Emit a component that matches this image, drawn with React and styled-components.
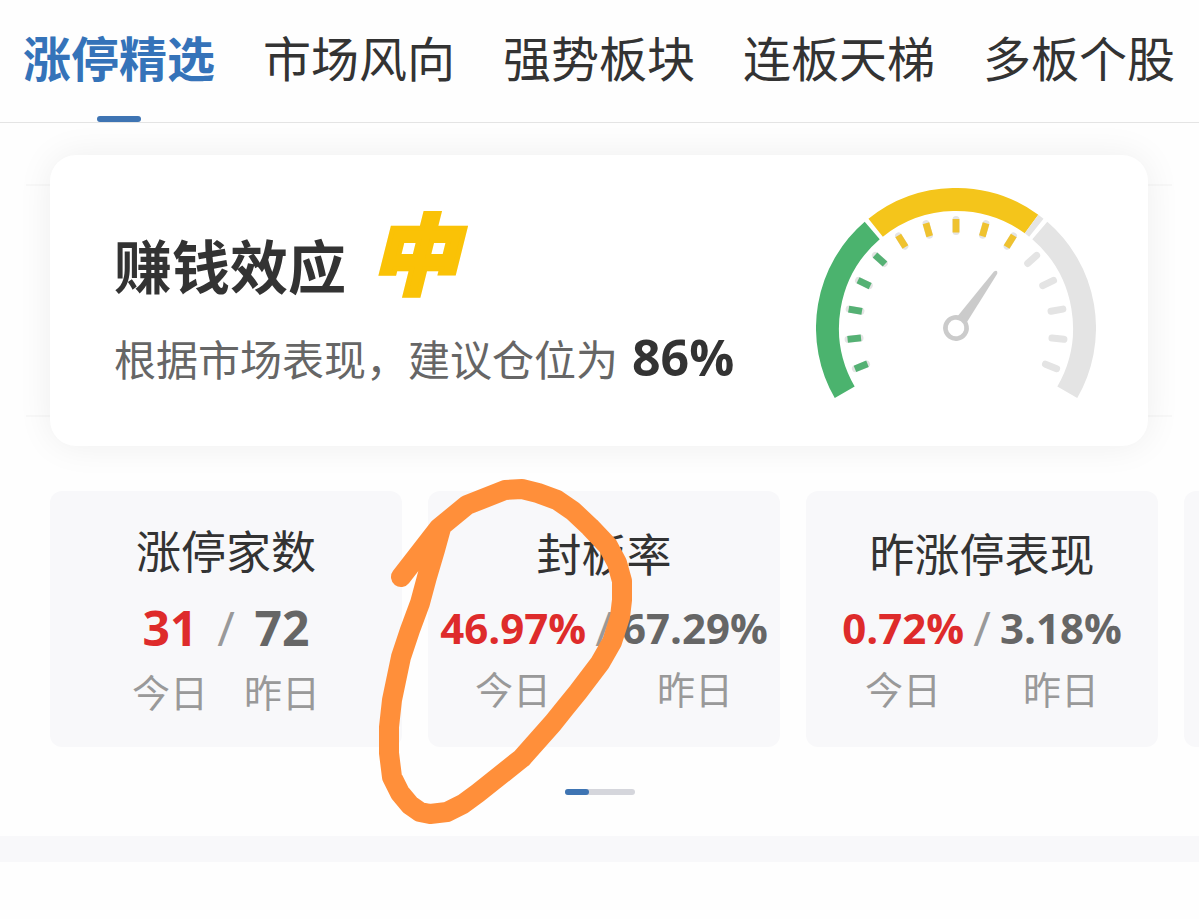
import React from "react";
import styled, { createGlobalStyle } from "styled-components";

const GlobalStyle = createGlobalStyle`
  * { box-sizing: border-box; }
  body {
    margin: 0;
    background: #fefefe;
    color: #333;
    font-family: "Noto Sans CJK SC", sans-serif;
    overflow-x: hidden;
  }
  h2, h3, p { margin: 0; }
`;

const Tabs = styled.nav`
  display: flex;
  justify-content: space-between;
  height: 123px;
  padding: 0 24px 0 23px;
  background: #fefefe;
  border-bottom: 1px solid #e4e4e4;
`;

const Tab = styled.button`
  display: flex;
  flex-direction: column;
  align-items: center;
  justify-content: space-between;
  padding: 28px 0 0;
  border: 0;
  background: none;
  font-family: inherit;
  font-size: 48px;
  line-height: 56px;
  white-space: nowrap;
  font-weight: ${(p) => (p.$active ? 700 : 400)};
  color: ${(p) => (p.$active ? "#3573b9" : "#333")};

  &::after {
    content: "";
    width: 44px;
    height: 6px;
    border-radius: 3px;
    background: ${(p) => (p.$active ? "#3e74b3" : "transparent")};
  }
`;

const Effect = styled.section`
  position: relative;
  display: flex;
  justify-content: space-between;
  align-items: flex-start;
  height: 291px;
  margin: 32px 51px 0 50px;
  padding: 33px 52px 0 64px;
  border-radius: 26px;
  background: #fff;
  box-shadow: 0 0 36px rgba(0, 0, 0, 0.065);

  /* Faint guide lines that run out of the card into its shadow. */
  &::before {
    content: "";
    position: absolute;
    z-index: -1;
    inset: 29px -24px;
    border: solid rgba(0, 0, 0, 0.025);
    border-width: 2px 0;
  }
`;

const TitleRow = styled.div`
  display: flex;
  align-items: flex-start;
  gap: 25px;
`;

const Title = styled.h2`
  padding-top: 40px;
  font-size: 58px;
  line-height: 72px;
  font-weight: 700;
`;

const Level = styled.span`
  padding-top: 12px;
  font-size: 86px;
  line-height: 100px;
  font-weight: 900;
  font-style: italic;
  color: #fac206;
  -webkit-text-stroke: 5px #fac206;
`;

const Advice = styled.p`
  display: flex;
  align-items: baseline;
  gap: 14px;
  margin-top: 27px;
  font-size: 42px;
  line-height: 60px;
  color: #666;
`;

const Position = styled.strong`
  font-family: "Open Sans", sans-serif;
  font-size: 50px;
  line-height: 60px;
  font-weight: 700;
  color: #333;
`;

const GaugeSvg = styled.svg`
  flex: none;
  width: 280px;
  height: 212px;
`;

const Stats = styled.section`
  position: relative;
  padding-top: 45px;
`;

const StatList = styled.div`
  display: flex;
  gap: 26px;
  padding-left: 50px;
  overflow: hidden;
`;

const StatCard = styled.article`
  flex: 0 0 calc((100vw - 143px) / 3);
  display: flex;
  flex-direction: column;
  align-items: center;
  height: 256px;
  padding-top: ${(p) => (p.$large ? 29 : 32)}px;
  border-radius: 12px;
  background: #f8f8fa;
`;

const StatTitle = styled.h3`
  font-size: 45px;
  line-height: 60px;
  font-weight: 400;
  white-space: nowrap;
`;

const Compare = styled.dl`
  display: grid;
  grid-template-columns: auto 36px auto;
  justify-items: center;
  row-gap: ${(p) => (p.$large ? 7 : 4)}px;
  margin: ${(p) => (p.$large ? 18 : 15)}px 0 0;
`;

const Value = styled.dd`
  grid-row: 1;
  margin: 0;
  font-family: "Open Sans", sans-serif;
  font-size: ${(p) => (p.$large ? 48 : 42)}px;
  line-height: 60px;
  font-weight: 700;
  color: ${(p) => (p.$today ? "#de2b2b" : "#666")};
`;

const Slash = styled.dd`
  grid-row: 1;
  margin: 0;
  font-family: "Open Sans", sans-serif;
  font-size: 48px;
  line-height: 60px;
  font-weight: 400;
  color: #999;
`;

const When = styled.dt`
  grid-row: 2;
  grid-column: ${(p) => p.$col};
  font-size: 38px;
  line-height: 52px;
  color: #999;
`;

const Pager = styled.div`
  width: 70px;
  height: 6px;
  margin: 42px auto 41px;
  border-radius: 3px;
  background: #d5d6dc;

  &::before {
    content: "";
    display: block;
    width: 24px;
    height: 6px;
    border-radius: 3px;
    background: #3e74b3;
  }
`;

const Scribble = styled.svg`
  position: absolute;
  top: 26px;
  left: 370px;
  width: 270px;
  height: 360px;
  pointer-events: none;
`;

const Band = styled.div`
  height: 26px;
  background: #f8f8fa;
`;

const TABS = ["涨停精选", "市场风向", "强势板块", "连板天梯", "多板个股"];

const STATS = [
  { title: "涨停家数", today: "31", yesterday: "72", large: true },
  { title: "封板率", today: "46.97%", yesterday: "67.29%" },
  { title: "昨涨停表现", today: "0.72%", yesterday: "3.18%" },
];

const GREEN = "#4bb36e";
const YELLOW = "#f4c51b";
const GREY = "#e4e4e4";

// Angles run clockwise from twelve o'clock around the hub.
function point(angle, radius) {
  const a = (angle * Math.PI) / 180;
  return `${(140 + radius * Math.sin(a)).toFixed(2)} ${(140 - radius * Math.cos(a)).toFixed(2)}`;
}

function Arc({ from, to, color }) {
  const d = `M${point(from, 128.5)}A128.5 128.5 0 0 1 ${point(to, 128.5)}`;
  return <path d={d} fill="none" stroke={color} strokeWidth="23" />;
}

function Gauge() {
  const ticks = Array.from({ length: 15 }, (_, i) => (i - 7) * 16);
  return (
    <GaugeSvg viewBox="0 0 280 212" role="img" aria-label="86%">
      <Arc from={-120} to={-40.7} color={GREEN} />
      <Arc from={-38.7} to={36} color={YELLOW} />
      <Arc from={36} to={38.7} color={GREY} />
      <Arc from={40.7} to={120} color={GREY} />
      {ticks.map((t) => (
        <g key={t} transform={`rotate(${t} 140 140)`}>
          <rect x="136.5" y="28" width="7" height="19" rx="3.5" fill={GREY} />
          {t <= 32 && (
            <rect
              x="136.6"
              y="31"
              width="6.8"
              height="13.5"
              fill={t < -32 ? "#55b174" : "#efc22f"}
            />
          )}
        </g>
      ))}
      <g transform="rotate(35.6 140 140)" fill="#cbcbcb">
        <path d="M134.5 129L138 72Q140 68 142 72L145.500 129Z" />
        <circle cx="140" cy="140" r="10.6" fill="#fff" stroke="#cbcbcb" strokeWidth="4.6" />
      </g>
    </GaugeSvg>
  );
}

function Stat({ title, today, yesterday, large }) {
  return (
    <StatCard $large={large}>
      <StatTitle>{title}</StatTitle>
      <Compare $large={large}>
        <When $col={1}>今日</When>
        <Value $today $large={large}>{today}</Value>
        <Slash>/</Slash>
        <When $col={3}>昨日</When>
        <Value $large={large}>{yesterday}</Value>
      </Compare>
    </StatCard>
  );
}

export default function App() {
  return (
    <>
      <GlobalStyle />
      <Tabs>
        {TABS.map((name, i) => (
          <Tab key={name} type="button" $active={i === 0}>
            {name}
          </Tab>
        ))}
      </Tabs>
      <main>
        <Effect>
          <div>
            <TitleRow>
              <Title>赚钱效应</Title>
              <Level>中</Level>
            </TitleRow>
            <Advice>
              根据市场表现，建议仓位为<Position>86%</Position>
            </Advice>
          </div>
          <Gauge />
        </Effect>
        <Stats>
          <StatList>
            {STATS.map((s) => (
              <Stat key={s.title} {...s} />
            ))}
            <StatCard />
          </StatList>
          <Pager />
          <Scribble viewBox="370 472 270 360" aria-hidden="true">
            <path
              d="M401 577L439 528L467 505L505 490L522 489L538 493L557 500L573 511L590 527L608 546L617 563L622 581L622 600L620 617L612 642L600 663L578 692L565 708L553 723L522 758L478 793L463 804L447 812L430 814L420 812L410 805L400 793L392 777L389 753L389 727L392 700L401 657L410 630L420 603L427 577L435 550L441 528"
              fill="none"
              stroke="#ff8f3a"
              strokeWidth="20"
              strokeLinecap="round"
              strokeLinejoin="round"
            />
          </Scribble>
        </Stats>
        <Band />
      </main>
    </>
  );
}
